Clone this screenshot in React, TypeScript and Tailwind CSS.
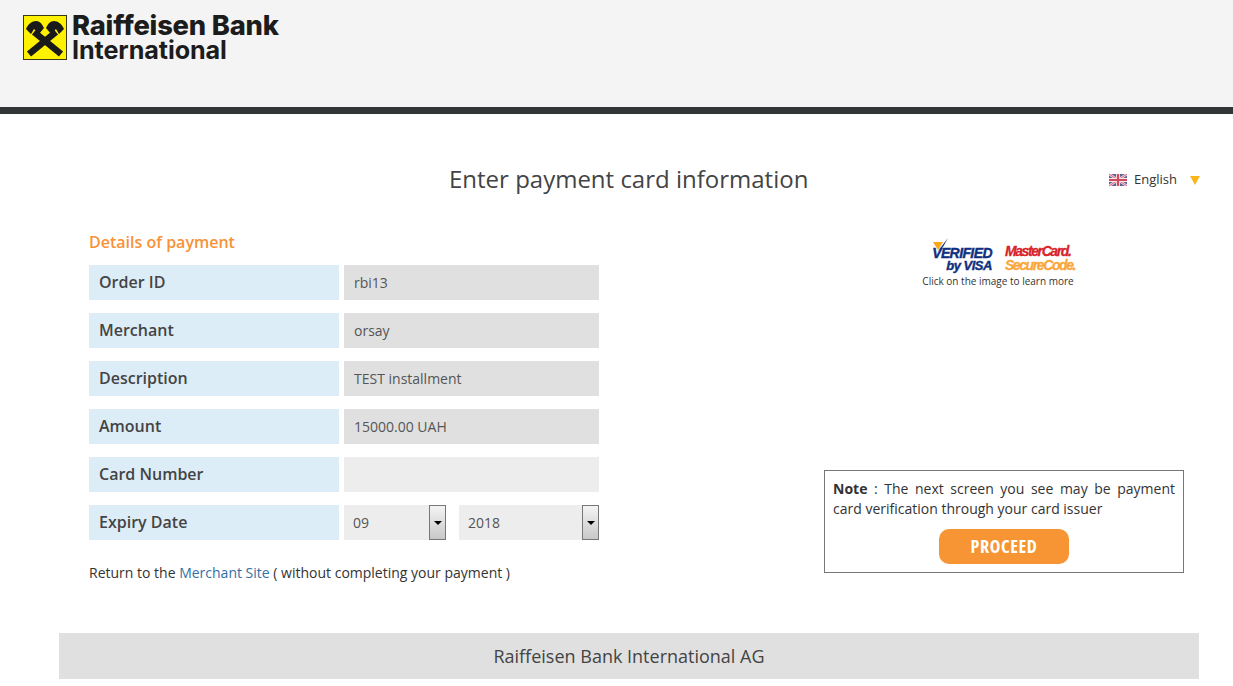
const rows = [
  { label: 'Order ID', value: 'rbi13' },
  { label: 'Merchant', value: 'orsay' },
  { label: 'Description', value: 'TEST installment' },
  { label: 'Amount', value: '15000.00 UAH' },
];

function Logo() {
  return (
    <svg width="44" height="45" viewBox="0 0 44 45" className="shrink-0">
      <rect x="0.5" y="0.5" width="43" height="44" fill="#fff200" stroke="#3a3a1a" />
      <path d="M6 39 L33 17 M38 39 L11 17" stroke="#1a1a1a" strokeWidth="6.5" fill="none" />
      <path d="M3 14 C5 9 9 6 13 6 C17 6 19 9 21 13 L16 19 L11 14 L8 19 Z" fill="#1a1a1a" />
      <path d="M41 14 C39 9 35 6 31 6 C27 6 25 9 23 13 L28 19 L33 14 L36 19 Z" fill="#1a1a1a" />
    </svg>
  );
}

function UkFlag() {
  return (
    <svg width="18" height="12" viewBox="0 0 18 12" className="shrink-0">
      <rect width="18" height="12" fill="#5a6496" />
      <path d="M0 0 L18 12 M18 0 L0 12" stroke="#f4dfe2" strokeWidth="2.4" />
      <path d="M0 0 L18 12 M18 0 L0 12" stroke="#d8566a" strokeWidth="0.9" />
      <path d="M9 0 V12 M0 6 H18" stroke="#f7e6e8" strokeWidth="4" />
      <path d="M9 0 V12 M0 6 H18" stroke="#d24a60" strokeWidth="2.2" />
    </svg>
  );
}

function SelectBox({ value, width }: { value: string; width: string }) {
  return (
    <div className={`${width} h-[35px] bg-[#ededed] flex items-center justify-between`}>
      <span className="pl-[9px] text-[14px] text-[#555]">{value}</span>
      <div className="w-[17px] h-[35px] border border-[#777] bg-gradient-to-b from-[#f4f4f4] to-[#c8c8c8] flex items-center justify-center">
        <div className="w-0 h-0 border-x-[4px] border-x-transparent border-t-[4px] border-t-black" />
      </div>
    </div>
  );
}

export default function App() {
  return (
    <div className="min-h-[686px] bg-white text-[#444] font-['Open_Sans',sans-serif]">
      <header className="h-[114px] bg-[#f4f4f4] border-b-[7px] border-[#333637] pt-[15px] pl-[23px] flex items-start gap-[5px]">
        <Logo />
        <div className="text-[#1c1c1c] font-['Inter',sans-serif] font-extrabold -mt-[3px]">
          <div className="text-[27.3px] leading-[27px] tracking-[-0.2px] whitespace-nowrap">Raiffeisen Bank</div>
          <div className="text-[25.2px] leading-[23px] font-bold tracking-[-0.1px] whitespace-nowrap">International</div>
        </div>
      </header>

      <div className="flex items-center h-[32px] mt-[49px] pl-[449px] pr-[33px]">
        <h1 className="text-[24px] text-[#444] whitespace-nowrap">Enter payment card information</h1>
        <div className="ml-auto flex items-center mt-[2px] text-[13px] text-[#333]">
          <UkFlag />
          <span className="ml-[7px]">English</span>
          <div className="ml-[13px] w-0 h-0 border-x-[5px] border-x-transparent border-t-[9px] border-t-[#f9b71b]" />
        </div>
      </div>

      <main className="flex justify-between pl-[89px] pr-[49px] mt-[35px]">
        <section className="w-[510px]">
          <h2 className="text-[16px] leading-[24px] font-semibold text-[#f79239]">Details of payment</h2>
          <div className="mt-[11px] flex flex-col gap-[13px]">
            {rows.map(r => (
              <div key={r.label} className="flex gap-[5px] h-[35px]">
                <div className="w-[250px] bg-[#ddedf8] pl-[10px] pb-[2px] flex items-center text-[16px] font-semibold text-[#444]">{r.label}</div>
                <div className="w-[255px] bg-[#e0e0e0] pl-[10px] flex items-center text-[14px] text-[#555]">{r.value}</div>
              </div>
            ))}
            <div className="flex gap-[5px] h-[35px]">
              <div className="w-[250px] bg-[#ddedf8] pl-[10px] pb-[2px] flex items-center text-[16px] font-semibold text-[#444]">Card Number</div>
              <div className="w-[255px] bg-[#ededed]" />
            </div>
            <div className="flex gap-[5px] h-[35px]">
              <div className="w-[250px] bg-[#ddedf8] pl-[10px] pb-[2px] flex items-center text-[16px] font-semibold text-[#444]">Expiry Date</div>
              <div className="w-[255px] flex justify-between">
                <SelectBox value="09" width="w-[102px]" />
                <SelectBox value="2018" width="w-[140px]" />
              </div>
            </div>
          </div>
          <p className="mt-[23px] text-[14px] leading-[20px] text-[#333]">
            Return to the <a className="text-[#336fa5]">Merchant Site</a> ( without completing your payment )
          </p>
        </section>

        <aside className="w-[360px] flex flex-col">
          <div className="flex flex-col items-center pr-[12px]">
            <div className="flex items-start gap-[13px] h-[44px] ml-[11px] font-['Liberation_Sans',sans-serif] italic font-bold">
              <div className="relative w-[60px] mt-[17px] text-right text-[#10307f] whitespace-nowrap [-webkit-text-stroke:0.4px_#10307f]">
                <svg width="18" height="14" viewBox="0 0 18 14" className="absolute left-0 -top-[9px]">
                  <path d="M1 4 L11 4 L6 12 Z" fill="#f9a61a" />
                  <path d="M6 13 L16 0 L11 9 Z" fill="#10307f" />
                </svg>
                <div className="text-[14px] leading-[13px] tracking-[-0.6px]">VERIFIED</div>
                <div className="text-[13px] leading-[12px] tracking-[-0.5px]">by VISA</div>
              </div>
              <div className="mt-[15px] whitespace-nowrap [-webkit-text-stroke:0.3px]">
                <div className="text-[14px] leading-[13px] tracking-[-1.4px] text-[#d8232a]">MasterCard.</div>
                <div className="text-[14px] leading-[14px] tracking-[-1.4px] text-[#f9a63a]">SecureCode.</div>
              </div>
            </div>
            <p className="text-[10px] leading-[14px] text-[#333]">Click on the image to learn more</p>
          </div>

          <div className="mt-[182px] h-[103px] border border-[#777] px-[8px] pt-[8px]">
            <p className="text-[14px] leading-[20px] text-[#333] text-justify">
              <b>Note</b> : The next screen you see may be payment card verification through your card issuer
            </p>
            <button className="block mt-[10px] ml-[106px] w-[130px] h-[35px] rounded-[10px] bg-[#f79433] text-white text-[18px] font-bold tracking-[0.6px] [font-stretch:75%]">PROCEED</button>
          </div>
        </aside>
      </main>

      <footer className="ml-[59px] mr-[34px] mt-[50px] h-[46px] bg-[#e0e0e0] flex items-center justify-center text-[18px] text-[#444]">
        Raiffeisen Bank International AG
      </footer>
    </div>
  );
}
